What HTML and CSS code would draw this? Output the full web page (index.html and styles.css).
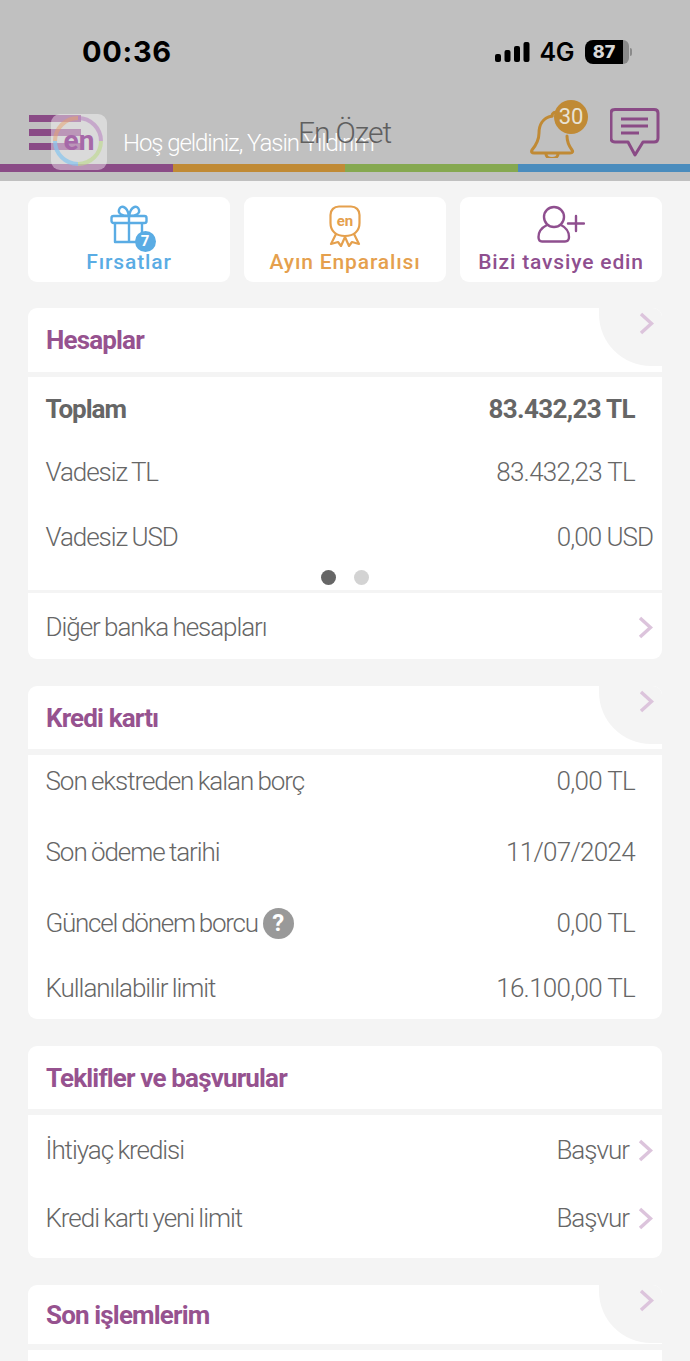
FILE: index.html
```html
<!DOCTYPE html>
<html lang="tr">
<head>
<meta charset="utf-8">
<title>En Özet</title>
<link rel="stylesheet" href="styles.css">
</head>
<body>
<header class="header">
  <div class="status">
    <span class="clock">00:36</span>
    <div class="status-right">
      <svg class="signal" width="35" height="22" viewBox="0 0 35 22"><rect x="0" y="13" width="6" height="8" rx="2"/><rect x="9.500" y="9" width="6" height="12" rx="2"/><rect x="19" y="5" width="6" height="16" rx="2"/><rect x="28.500" y="1" width="6" height="20" rx="2"/></svg>
      <span class="net">4G</span>
      <div class="battery"><span class="battery-level">87</span><span class="battery-rest"></span><span class="battery-cap"></span></div>
    </div>
  </div>
  <div class="nav">
    <div class="menu"><span></span><span></span><span></span></div>
    <svg class="logo" width="56" height="56" viewBox="0 0 56 56">
      <rect width="56" height="56" rx="9" fill="#fff" fill-opacity=".42"/>
      <path d="M4 27A23 23 0 0 1 27 4" fill="none" stroke="#e8a06a" stroke-width="4" opacity=".5"/>
      <path d="M27 4A23 23 0 0 1 50 27" fill="none" stroke="#b67fc0" stroke-width="4" opacity=".55"/>
      <path d="M50 27A23 23 0 0 1 27 50" fill="none" stroke="#bcd98a" stroke-width="4" opacity=".6"/>
      <path d="M27 50A23 23 0 0 1 4 27" fill="none" stroke="#86c4ee" stroke-width="4" opacity=".7"/>
      <text x="28" y="36" text-anchor="middle" class="logo-text">en</text>
    </svg>
    <span class="welcome">Hoş geldiniz, Yasin Yıldırım</span>
    <span class="page-title">En Özet</span>
    <div class="nav-actions">
      <div class="bell">
        <svg width="46" height="50" viewBox="0 0 46 50" fill="none" stroke="#c08a35" stroke-width="3" stroke-linejoin="round" stroke-linecap="round"><path d="M22 8C12 10 9 18 9 25C9 32 7 36 2 42C1 44 2 45 4 45H40C43 45 43 43 42 42C39 38 37 34 37 28"/><path d="M22 8C22 5 25 3 28 5"/><path d="M16 46C16 52 28 52 28 46"/></svg>
        <span class="bell-badge">30</span>
      </div>
      <svg width="50" height="50" viewBox="0 0 50 50" fill="none" stroke="#8a4b86" stroke-width="3"><path d="M5 1.500H44C46.500 1.500 48 3 48 5V30C48 32.500 46.500 34 44 34H33L25 47L18 34H5C2.500 34 1 32.500 1 30V5C1 3 2.500 1.500 5 1.500Z" stroke-linejoin="round"/><path d="M11 11H38M11 18H38M11 25H29"/></svg>
    </div>
  </div>
  <div class="strip"><span class="strip-purple"></span><span class="strip-orange"></span><span class="strip-green"></span><span class="strip-blue"></span></div>
</header>

<main class="content">
  <div class="quick">
    <div class="quick-card">
      <div class="quick-icon">
        <svg width="38" height="40" viewBox="0 0 38 40" fill="none" stroke="#5aace4" stroke-width="2.400" stroke-linejoin="round"><rect x="1.500" y="11" width="35" height="7" rx="2"/><path d="M5 18V37H32V18M19 11V37M19 11C11 11 8 8 9 5C10 0 17 0 19 11C21 0 28 0 29 5C30 8 27 11 19 11Z"/></svg>
        <span class="gift-badge">7</span>
      </div>
      <span class="quick-label blue">Fırsatlar</span>
    </div>
    <div class="quick-card">
      <div class="quick-icon">
        <svg width="32" height="42" viewBox="0 0 32 42" fill="none" stroke="#e5a04d" stroke-width="2.200" stroke-linejoin="round"><path d="M10 1.500H22C27 1.500 30.500 5 30.500 10V18C30.500 26 25 31 16 31C7 31 1.500 26 1.500 18V10C1.500 5 5 1.500 10 1.500Z"/><path d="M7 29L2 39L9 37L12 41L16 32L20 41L23 37L30 39L25 29"/><text x="16" y="21" text-anchor="middle" class="medal-text">en</text></svg>
      </div>
      <span class="quick-label orange">Ayın Enparalısı</span>
    </div>
    <div class="quick-card">
      <div class="quick-icon">
        <svg width="48" height="38" viewBox="0 0 48 38" fill="none" stroke="#8f4f8f" stroke-width="2.400" stroke-linecap="round" stroke-linejoin="round"><circle cx="17" cy="12" r="10"/><path d="M10 20C4 23 1.500 28 1.500 32C1.500 35 3 36.500 5 36.500H28C31 36.500 32 35 32 32C32 28 30 23 24 20"/><path d="M31 18.500H47M39 11V26"/></svg>
      </div>
      <span class="quick-label purple">Bizi tavsiye edin</span>
    </div>
  </div>

  <section class="section">
    <div class="sec-head tall">
      <h2>Hesaplar</h2>
      <div class="corner"><svg class="chev" width="15" height="23" viewBox="0 0 15 23"><path d="M2 2L12.500 11.500L2 21"/></svg></div>
    </div>
    <div class="sec-body first-body">
      <div class="row strong"><span>Toplam</span><span>83.432,23 TL</span></div>
      <div class="row row-gap-33"><span>Vadesiz TL</span><span>83.432,23 TL</span></div>
      <div class="row row-gap-35 spill"><span>Vadesiz USD</span><span>0,00 USD</span></div>
      <div class="dots"><span class="dot on"></span><span class="dot"></span></div>
    </div>
    <div class="sec-foot">
      <div class="row"><span>Diğer banka hesapları</span><svg class="chev" width="15" height="23" viewBox="0 0 15 23"><path d="M2 2L12.500 11.500L2 21"/></svg></div>
    </div>
  </section>

  <section class="section">
    <div class="sec-head">
      <h2>Kredi kartı</h2>
      <div class="corner"><svg class="chev" width="15" height="23" viewBox="0 0 15 23"><path d="M2 2L12.500 11.500L2 21"/></svg></div>
    </div>
    <div class="sec-body card-body">
      <div class="row"><span>Son ekstreden kalan borç</span><span>0,00 TL</span></div>
      <div class="row row-gap-41"><span>Son ödeme tarihi</span><span>11/07/2024</span></div>
      <div class="row row-gap-41"><span class="with-help">Güncel dönem borcu <span class="help">?</span></span><span>0,00 TL</span></div>
      <div class="row row-gap-35"><span>Kullanılabilir limit</span><span>16.100,00 TL</span></div>
    </div>
  </section>

  <section class="section">
    <div class="sec-head">
      <h2>Teklifler ve başvurular</h2>
    </div>
    <div class="sec-body offer-body">
      <div class="row"><span>İhtiyaç kredisi</span><span class="apply">Başvur <svg class="chev" width="15" height="23" viewBox="0 0 15 23"><path d="M2 2L12.500 11.500L2 21"/></svg></span></div>
      <div class="row row-gap-38"><span>Kredi kartı yeni limit</span><span class="apply">Başvur <svg class="chev" width="15" height="23" viewBox="0 0 15 23"><path d="M2 2L12.500 11.500L2 21"/></svg></span></div>
    </div>
  </section>

  <section class="section">
    <div class="sec-head short">
      <h2>Son işlemlerim</h2>
      <div class="corner"><svg class="chev" width="15" height="23" viewBox="0 0 15 23"><path d="M2 2L12.500 11.500L2 21"/></svg></div>
    </div>
    <div class="sec-body last-body"></div>
  </section>
</main>
</body>
</html>
```

FILE: styles.css
```css
* { box-sizing: border-box; }
html, body { margin: 0; height: 100%; overflow: hidden; }
body { background: #f4f4f4; font-family: Roboto, "Liberation Sans", sans-serif; color: #666; }

.header { height: 181px; background: #c0c0c0; display: flex; flex-direction: column; }
.status { height: 104px; padding: 35px 58px 0 82px; display: flex; justify-content: space-between; align-items: flex-start; }
.clock { font-family: Inter, sans-serif; font-weight: 700; font-size: 29px; line-height: 34px; color: #000; letter-spacing: .7px; }
.status-right { display: flex; align-items: center; height: 34px; }
.signal { fill: #000; margin: 0 10px 0 0; }
.net { font-family: Inter, sans-serif; font-weight: 600; font-size: 25px; letter-spacing: -.5px; color: #000; margin-right: 11px; }
.battery { display: flex; align-items: center; height: 24px; }
.battery-level { width: 38px; height: 24px; background: #000; color: #d8d8d8; border-radius: 8px 0 0 8px; font-family: Inter, sans-serif; font-weight: 800; font-size: 18px; line-height: 24px; text-align: center; }
.battery-rest { width: 6px; height: 24px; background: #8a8a8a; border-radius: 0 7px 7px 0; }
.battery-cap { width: 2px; height: 8px; margin-left: 1px; background: #8a8a8a; border-radius: 0 2px 2px 0; }

.nav { position: relative; height: 60px; padding-left: 29px; }
.menu { display: flex; flex-direction: column; gap: 7px; width: 52px; padding-top: 11px; }
.menu span { height: 7px; background: #8a4b86; }
.logo { position: absolute; left: 51px; top: 10px; }
.logo-text { font-family: Roboto, sans-serif; font-weight: 700; font-size: 28px; fill: #a668a8; }
.welcome { position: absolute; left: 123px; top: 25px; font-weight: 300; font-size: 24px; line-height: 28px; color: #fff; letter-spacing: -1.07px; white-space: nowrap; }
.page-title { position: absolute; left: 298px; top: 11px; font-weight: 300; font-size: 30px; line-height: 36px; color: #5f5f5f; letter-spacing: -1.1px; white-space: nowrap; }
.nav-actions { position: absolute; left: 530px; top: 4px; display: flex; gap: 34px; }
.bell { position: relative; width: 46px; height: 50px; }
.bell-badge { position: absolute; left: 24px; top: -8px; width: 34px; height: 34px; border-radius: 50%; background: #c08a35; color: #e8e2d4; font-size: 22px; font-weight: 400; line-height: 34px; text-align: center; }

.strip { display: flex; height: 8px; }
.strip span { flex: 1; }
.strip-purple { background: #8a4b86; }
.strip-orange { background: #c08a35; }
.strip-green { background: #85a850; }
.strip-blue { background: #4a8cbd; }

.content { padding: 16px 28px 0; display: flex; flex-direction: column; }
.quick { display: flex; gap: 14px; margin-bottom: 26px; }
.quick-card { flex: 1; height: 85px; background: #fff; border-radius: 9px; display: flex; flex-direction: column; align-items: center; padding-top: 8px; }
.quick-icon { position: relative; height: 44px; display: flex; align-items: flex-start; justify-content: center; }
.gift-badge { position: absolute; left: 24.500px; top: 25.500px; width: 21px; height: 21px; border-radius: 50%; background: #5aace4; color: #fff; font-size: 15px; font-weight: 700; line-height: 21px; text-align: center; }
.medal-text { font-family: Roboto, sans-serif; font-weight: 700; font-size: 15px; fill: #e5a04d; stroke: none; }
.quick-label { font-size: 21px; font-weight: 500; line-height: 26px; letter-spacing: .85px; white-space: nowrap; }
.blue { color: #5aace4; }
.orange { color: #e5a04d; }
.purple { color: #8f4f8f; }

.section { display: flex; flex-direction: column; margin-bottom: 27px; }
.sec-head { position: relative; height: 63px; background: #fff; border-radius: 9px 9px 0 0; overflow: hidden; display: flex; align-items: center; padding: 0 17px 0 18px; margin-bottom: 6px; }
.sec-head.tall { height: 64px; margin-bottom: 5px; }
.sec-head.short { height: 59px; }
.sec-head h2 { margin: 0; padding-top: 1px; font-size: 26px; font-weight: 700; line-height: 32px; letter-spacing: -.85px; color: #96528f; white-space: nowrap; }
.sec-head.tall h2 { padding-top: 0; margin-top: -1px; }
.corner { position: absolute; right: 0; top: 0; width: 63px; height: 58px; background: #f4f4f4; border-bottom-left-radius: 52px; padding: 4px 0 0 40px; }
.chev { fill: none; stroke: #dcc4dc; stroke-width: 3.500; display: block; flex: none; }

.sec-body { background: #fff; display: flex; flex-direction: column; padding: 17px 27px 0 17.500px; }
.first-body { height: 213px; }
.card-body { height: 264px; padding-top: 11px; border-radius: 0 0 9px 9px; }
.offer-body { height: 143px; padding-top: 20px; padding-right: 9px; border-radius: 0 0 9px 9px; }
.last-body { height: 40px; }
.sec-foot { margin-top: 3px; height: 66px; background: #fff; border-radius: 0 0 9px 9px; padding: 19px 9px 0 17.500px; }

.row { height: 30px; display: flex; justify-content: space-between; align-items: center; font-size: 26px; font-weight: 300; line-height: 30px; letter-spacing: -.7px; white-space: nowrap; }
.row > span:first-child { letter-spacing: -1.05px; word-spacing: -1px; }
.row > span:first-child.with-help { letter-spacing: -1.25px; }
.row.strong { font-weight: 700; letter-spacing: -.65px; }
.row.strong > span:first-child { letter-spacing: -1px; }
.row-gap-33 { margin-top: 33px; }
.row-gap-35 { margin-top: 35px; }
.row-gap-38 { margin-top: 38px; }
.row-gap-41 { margin-top: 41px; }
.spill { margin-right: -18px; letter-spacing: -1px; }
.apply { display: flex; align-items: center; gap: 9px; letter-spacing: -1px; }
.with-help { display: flex; align-items: center; gap: 5px; }
.help { width: 31px; height: 31px; border-radius: 50%; background: #999; color: #fff; font-size: 24px; font-weight: 700; line-height: 31px; letter-spacing: 0; text-align: center; }
.dots { display: flex; justify-content: center; gap: 18px; margin: 18px 0 0 10px; }
.dot { width: 15px; height: 15px; border-radius: 50%; background: #d3d3d3; }
.dot.on { background: #666; }
```
